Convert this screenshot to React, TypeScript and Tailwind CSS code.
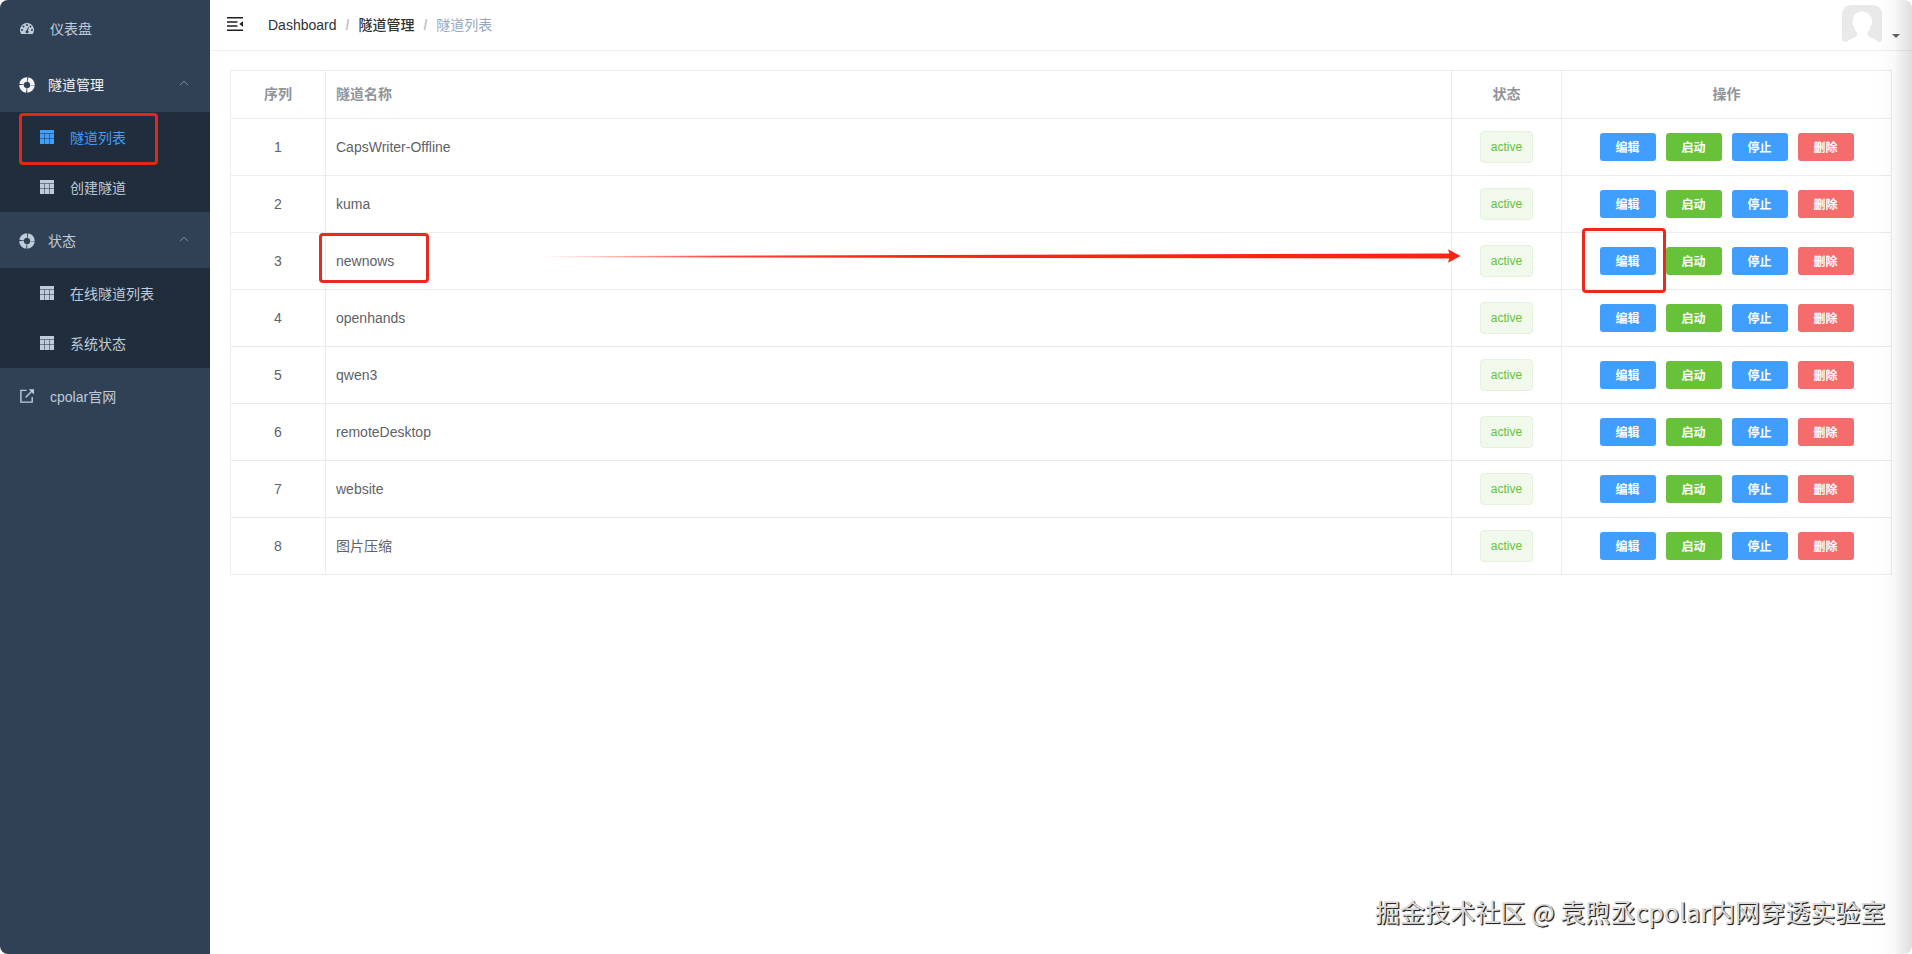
import React from "react";

const tunnels = ["CapsWriter-Offline", "kuma", "newnows", "openhands", "qwen3", "remoteDesktop", "website", "图片压缩"];

const actions = [
  { label: "编辑", tone: "bg-[#409eff]" },
  { label: "启动", tone: "bg-[#67c23a]" },
  { label: "停止", tone: "bg-[#409eff]" },
  { label: "删除", tone: "bg-[#f56c6c]" },
];

function GaugeIcon() {
  return (
    <svg viewBox="0 0 128 100" className="h-[11px] w-[14px]" fill="currentColor">
      <path
        fillRule="evenodd"
        d="M64 0a64 64 0 0 0-54 98q1.500 2 4 2h100q2.500 0 4-2A64 64 0 0 0 64 0zM18.300 54.500a9.100 9.100 0 1 1 0 18.200 9.100 9.100 0 1 1 0-18.200zM32 22.700a9.100 9.100 0 1 1 0 18.200 9.100 9.100 0 1 1 0-18.200zM64 9.100a9.100 9.100 0 1 1 0 18.200A9.100 9.100 0 1 1 64 9.100zM96 22.700a9.100 9.100 0 1 1 0 18.200 9.100 9.100 0 1 1 0-18.200zM109.700 54.500a9.100 9.100 0 1 1 0 18.200 9.100 9.100 0 1 1 0-18.200zM77.700 37.200q3 1.200 2.300 5l-7.200 27.100q4.800 3.700 5.300 9.500a13.700 13.700 0 1 1-14.200-11.700l7.200-27.200q2-4 6.600-2.700z"
      />
    </svg>
  );
}

function RingIcon() {
  return (
    <svg viewBox="0 0 16 16" className="mt-0.5 h-4 w-4" fill="none" stroke="currentColor">
      <circle cx="8" cy="8" r="5.500" strokeWidth="4.600" strokeDasharray="7.739 0.900" strokeDashoffset="-0.450" />
    </svg>
  );
}

function TableIcon() {
  return (
    <svg viewBox="0 0 14 14" className="h-3.5 w-3.5" fill="currentColor">
      <path d="M0 0h14v3.200H0zM0 3.700h4.400v4.800H0zM4.900 3.700h4.200v4.800H4.900zM9.600 3.700H14v4.800H9.600zM0 9h4.400v5H0zM4.900 9h4.200v5H4.900zM9.600 9H14v5H9.600z" />
    </svg>
  );
}

function LinkIcon() {
  return (
    <svg viewBox="0 0 14 14" className="h-3.5 w-3.5" fill="none" stroke="currentColor" strokeWidth="1.400">
      <path d="M6.500 1.400H.9v11.700h11.300V8" />
      <path d="M5.600 8.400 12 2" />
      <path d="M8.800.2H14v5.200z" fill="currentColor" stroke="none" />
    </svg>
  );
}

function ChevronUp() {
  return (
    <svg viewBox="0 0 10 6" className="h-1.5 w-2.5" fill="none" stroke="#8492a3" strokeWidth="1">
      <path d="M1 5.200 5 1.200l4 4" />
    </svg>
  );
}

function RootItem({ icon, label }: { icon: React.ReactNode; label: string }) {
  return (
    <a className="flex h-14 items-center pl-5">
      <span className="flex w-3.5 justify-center">{icon}</span>
      <span className="ml-4 pt-px">{label}</span>
    </a>
  );
}

function SubMenu({ label, active = false, items }: { label: string; active?: boolean; items: { label: string; current?: boolean }[] }) {
  return (
    <div>
      <div className={active ? "flex h-14 items-center pr-[21px] pl-[19px] text-[#f4f4f5]" : "flex h-14 items-center pr-[21px] pl-[19px]"}>
        <RingIcon />
        <span className="ml-[13px] flex-1 pt-px">{label}</span>
        <span className="-mt-0.5">
          <ChevronUp />
        </span>
      </div>
      <div className="bg-[#1f2d3d]">
        {items.map((item) => (
          <a
            key={item.label}
            className={item.current ? "flex h-[50px] items-center pl-10 text-[#409eff]" : "flex h-[50px] items-center pl-10"}
          >
            <TableIcon />
            <span className="ml-4 pt-0.5">{item.label}</span>
          </a>
        ))}
      </div>
    </div>
  );
}

function Sidebar() {
  return (
    <aside className="w-[210px] shrink-0 rounded-l-lg bg-[#304156] text-[#bfcbd9]">
      <RootItem icon={<GaugeIcon />} label="仪表盘" />
      <SubMenu label="隧道管理" active items={[{ label: "隧道列表", current: true }, { label: "创建隧道" }]} />
      <SubMenu label="状态" items={[{ label: "在线隧道列表" }, { label: "系统状态" }]} />
      <RootItem icon={<LinkIcon />} label="cpolar官网" />
    </aside>
  );
}

function Navbar() {
  return (
    <header className="flex h-[51px] items-center border-b border-[#f0f0f0] pr-3 pl-[17px]">
      <svg viewBox="0 0 16 14" className="-mt-0.5 h-3.5 w-4" fill="#1f1f1f">
        <path d="M0 0h16v1.500H0zM0 4.200h10.500v1.500H0zM0 8.300h10.500v1.500H0zM0 12.500h16V14H0zM16 4.300v5.400L12.300 7z" />
      </svg>
      <nav className="ml-[25px] flex flex-1 items-center text-[#303133]">
        <span>Dashboard</span>
        <span className="mx-[9px] font-bold text-[#c0c4cc]">/</span>
        <span className="font-medium">隧道管理</span>
        <span className="mx-[9px] font-bold text-[#c0c4cc]">/</span>
        <span className="text-[#97a8be]">隧道列表</span>
      </nav>
      <svg viewBox="0 0 40 40" className="h-10 w-10">
        <path
          d="M10 0h20q10 0 10 10v24q0 3-3 3-2-1-5-3-5-2-6.500-3.500v-3q2.500-2 3-6.500 2-1 1.500-4 0-10-10-10.500Q10 7.500 10.500 17.500q-.5 3 1.500 4 .5 4.500 3 6.500v3Q13 32.500 8 34.500q-2 1-4 2.500-4 0-4-3V10Q0 0 10 0z"
          fill="#e9e9e9"
        />
      </svg>
      <svg viewBox="0 0 8 4" className="mt-[22px] ml-[10px] h-1 w-2" fill="#606266">
        <path d="M0 0h8L4 4z" />
      </svg>
    </header>
  );
}

const columns = "grid grid-cols-[95px_1126px_110px_330px] border-b border-[#ebecee]";
const cell = "flex items-center border-r border-[#ebecee]";

function TunnelTable() {
  return (
    <section className="mt-[19px] ml-5 w-[1662px] border-t border-l border-[#ebecee] text-[#606266]">
      <div className={`${columns} h-12 font-bold text-[#909399]`}>
        <div className={`${cell} justify-center pb-0.5`}>序列</div>
        <div className={`${cell} pb-0.5 pl-2.5`}>隧道名称</div>
        <div className={`${cell} justify-center pb-0.5`}>状态</div>
        <div className={`${cell} justify-center pb-0.5`}>操作</div>
      </div>
      {tunnels.map((name, i) => (
        <div key={name} className={`${columns} h-[57px]`}>
          <div className={`${cell} justify-center`}>{i + 1}</div>
          <div className={`${cell} pl-2.5`}>{name}</div>
          <div className={`${cell} justify-center`}>
            <span className="flex h-8 w-[53px] items-center justify-center rounded border border-[#e4f2dc] bg-[#f0f9eb] text-xs text-[#67c23a]">
              active
            </span>
          </div>
          <div className={`${cell} justify-center gap-2.5`}>
            {actions.map((a) => (
              <button key={a.label} className={`${a.tone} h-7 w-14 rounded-[3px] pt-0.5 text-xs font-bold text-white`}>
                {a.label}
              </button>
            ))}
          </div>
        </div>
      ))}
    </section>
  );
}

function Annotations() {
  return (
    <>
      <div className="absolute top-[113px] left-[19px] h-[52px] w-[139px] rounded-[4px] border-[3px] border-[#e8251c]" />
      <div className="absolute top-[233px] left-[319px] h-[50px] w-[110px] rounded-[4px] border-[3px] border-[#ea2a20]" />
      <div className="absolute top-[228px] left-[1582px] h-[65px] w-[84px] rounded-[4px] border-[3px] border-[#ea2a20]" />
      <svg viewBox="0 0 920 16" className="absolute top-[248px] left-[541px] h-4 w-[920px]">
        <defs>
          <linearGradient id="fade" x1="0" x2="1" y1="0" y2="0">
            <stop offset="0" stopColor="#fb2312" stopOpacity="0" />
            <stop offset="0.200" stopColor="#fb2312" stopOpacity="0.850" />
            <stop offset="0.400" stopColor="#fb2312" />
          </linearGradient>
        </defs>
        <path d="M0 8.300 910 5.500v5L0 9.300z" fill="url(#fade)" />
        <path d="M907 1.300 919.500 8 907 14.700l2-6.700z" fill="#fb2312" />
      </svg>
      <div className="absolute top-0 right-0 h-full w-9 rounded-r-lg bg-linear-to-r from-black/0 via-black/[0.025] to-black/[0.13]" />
      <div className="absolute top-[892px] left-[1375px] text-[25px] leading-[38px] tracking-[0.050px] whitespace-nowrap text-[#dcdcdc] [font-family:'Noto_Sans_CJK_SC',sans-serif] [text-shadow:1px_1px_1px_#222,1px_1px_0_#444]">
        掘金技术社区 @ 袁煦丞cpolar内网穿透实验室
      </div>
    </>
  );
}

export default function App() {
  return (
    <div className="relative flex h-[954px] w-[1912px] overflow-hidden bg-white text-sm [font-family:'Liberation_Sans','Noto_Sans_CJK_SC',sans-serif]">
      <Sidebar />
      <main className="flex-1">
        <Navbar />
        <TunnelTable />
      </main>
      <Annotations />
    </div>
  );
}
